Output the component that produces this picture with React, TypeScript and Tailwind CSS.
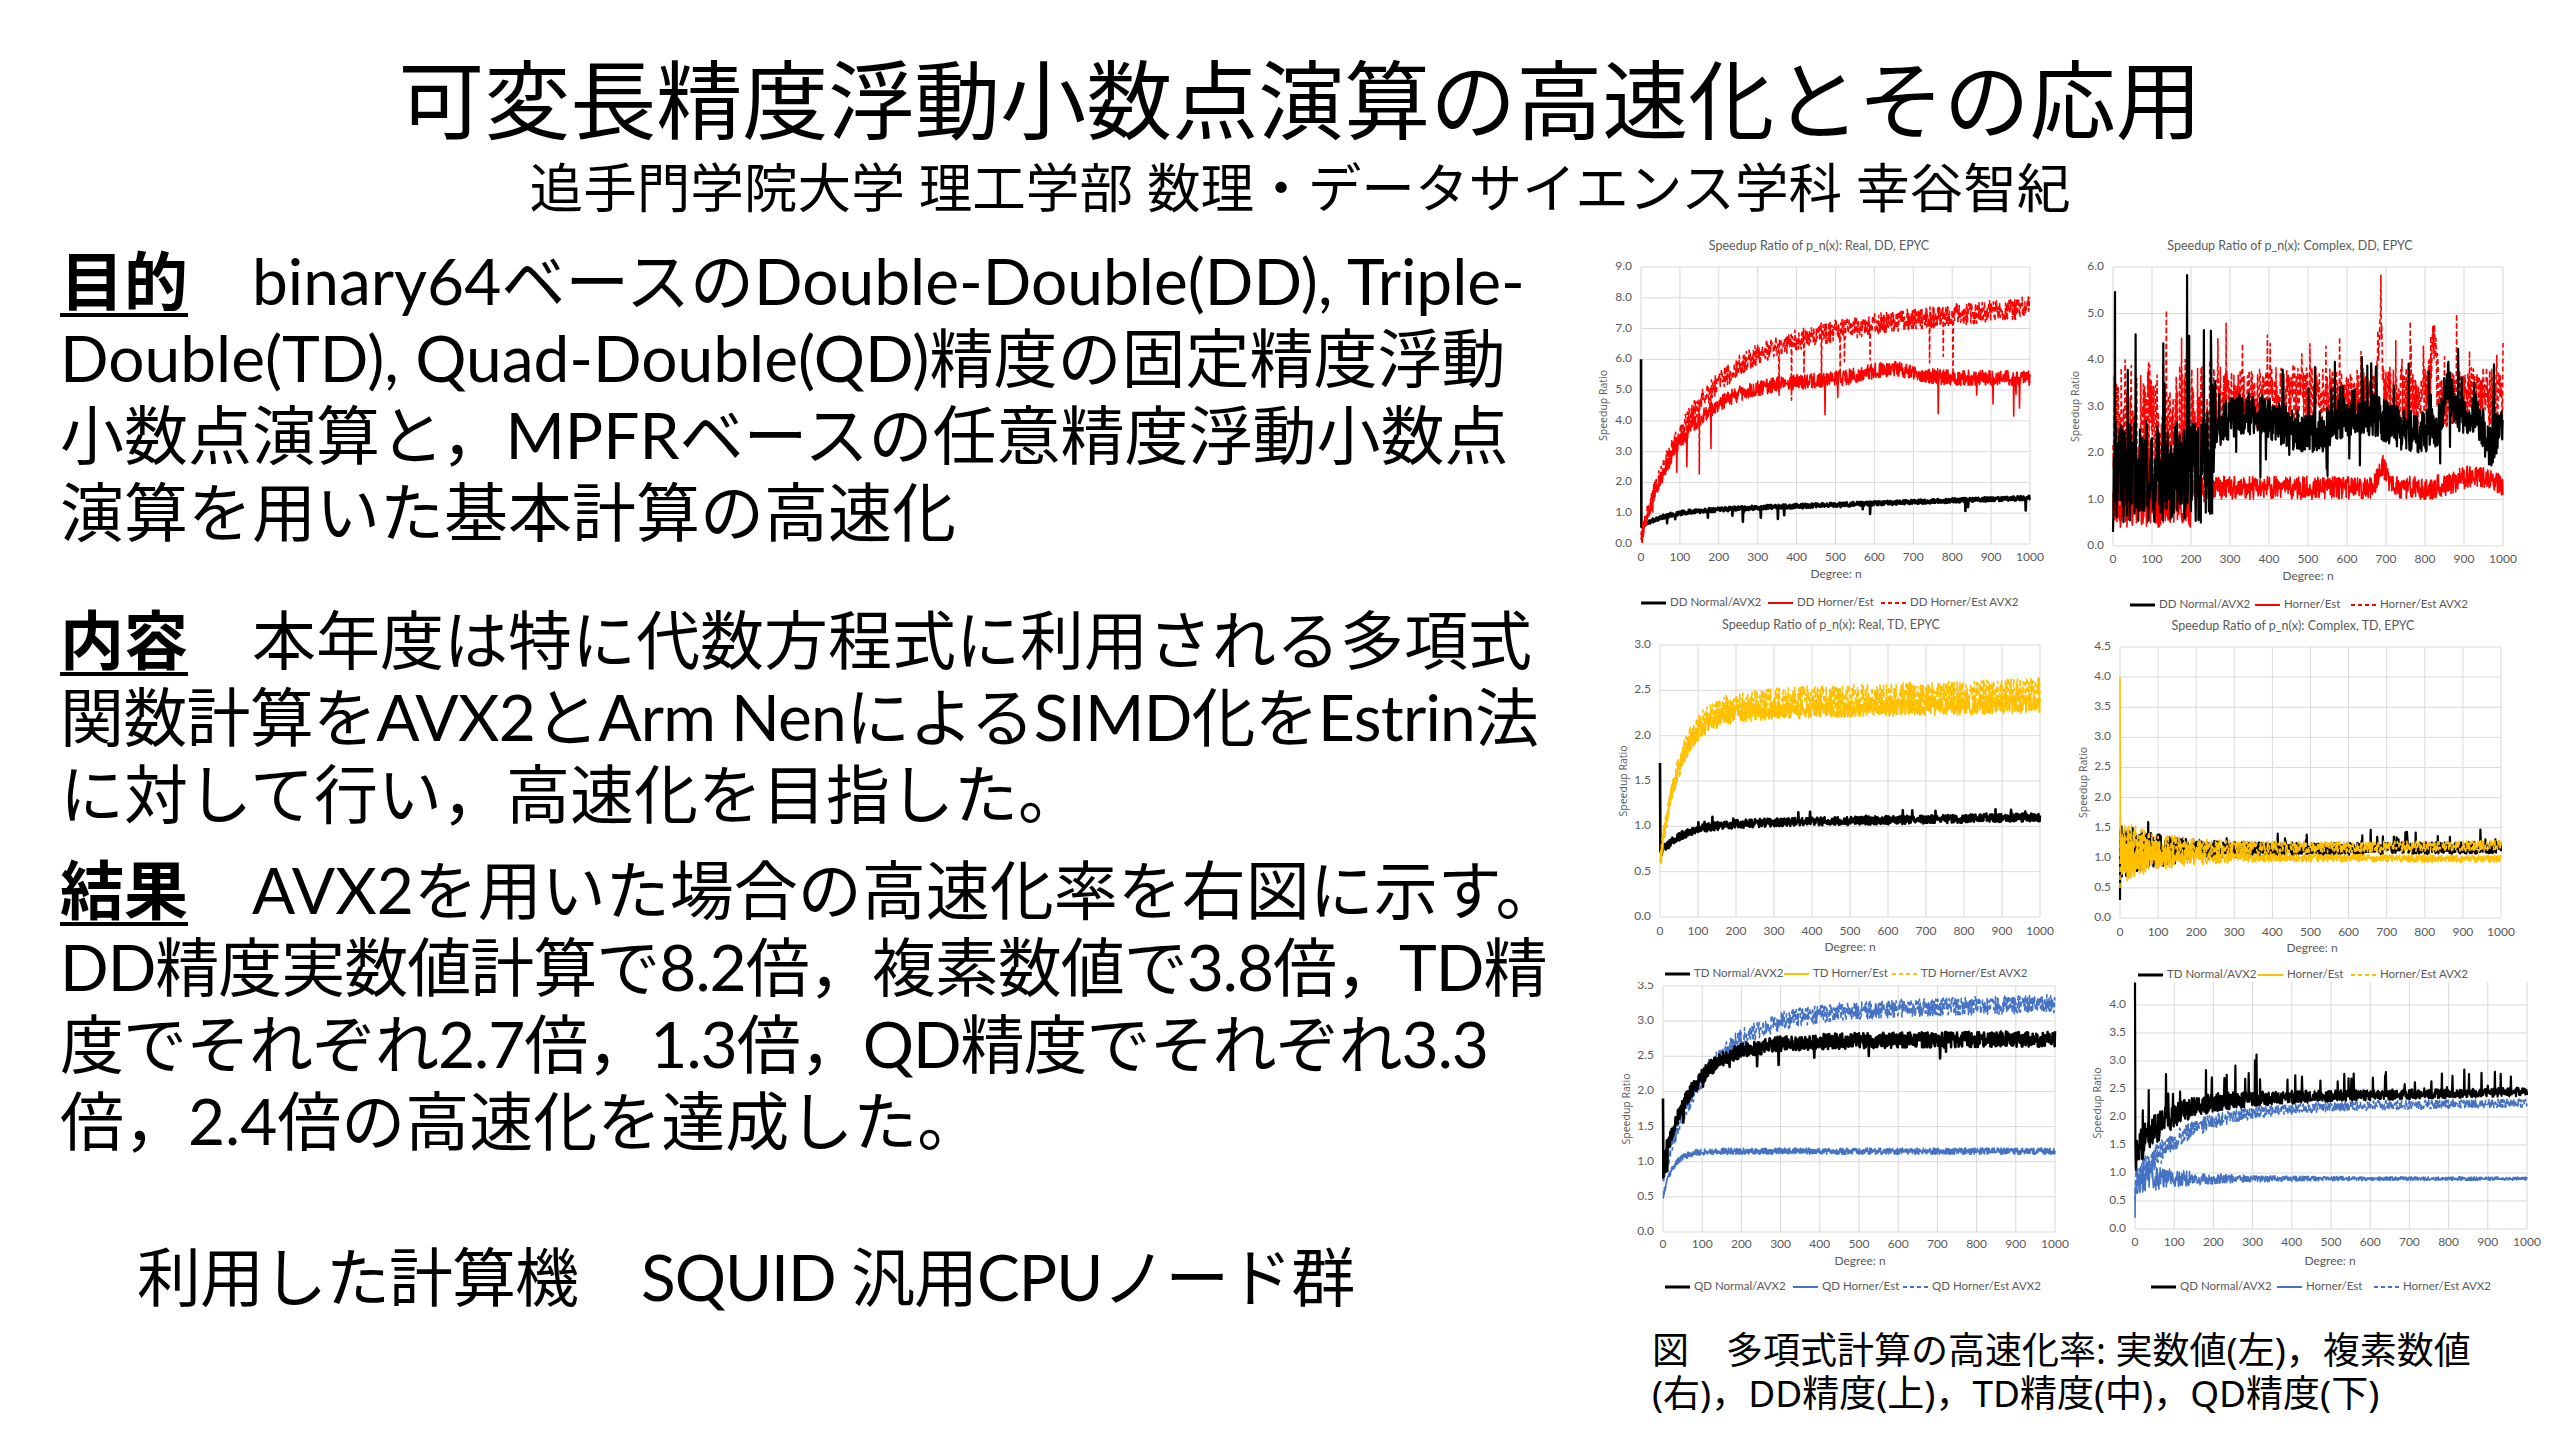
type Series = { color: string; width: number; dash?: string; data: number[] };
type LegendItem = { x: number; label: string; color: string; width: number; dash?: string };
type ChartCfg = {
  title?: string;
  titleX?: number;
  titleY?: number;
  l: number;
  r: number;
  t: number;
  b: number;
  yMax: number;
  yStep: number;
  xLabelY: number;
  degreeX: number;
  degreeY: number;
  speedX: number;
  legendY: number;
  legend: LegendItem[];
  series: Series[];
};

const BLACK = '#000000';
const RED = '#ff0000';
const GOLD = '#ffc000';
const BLUE = '#4472c4';
const TEXT = '#595959';

function mulberry32(a: number) {
  return () => {
    a |= 0;
    a = (a + 0x6d2b79f5) | 0;
    let t = Math.imul(a ^ (a >>> 15), 1 | a);
    t = (t + Math.imul(t ^ (t >>> 7), 61 | t)) ^ t;
    return ((t ^ (t >>> 14)) >>> 0) / 4294967296;
  };
}

// n = 0..1000, r() in [-1, 1], u() in [0, 1)
function gen(seed: number, f: (n: number, r: () => number, u: () => number) => number) {
  const u = mulberry32(seed);
  const r = () => u() * 2 - 1;
  const out: number[] = [];
  for (let n = 0; n <= 1000; n++) out.push(f(n, r, u));
  return out;
}

const sat = (n: number, tau: number) => 1 - Math.exp(-n / tau);
const bump = (n: number, c: number, w: number) => Math.exp(-(((n - c) / w) ** 2));
const spike = (u: () => number, p: number, amp: number) => (u() < p ? amp * (0.5 + u()) : 0);

const legend3 = (xs: number[], labels: string[], color: string): LegendItem[] => [
  { x: xs[0], label: labels[0], color: BLACK, width: 3 },
  { x: xs[1], label: labels[1], color, width: 2 },
  { x: xs[2], label: labels[2], color, width: 2, dash: '4 3' },
];

const BW = 2.6;
const CW = 1.6;

const charts: ChartCfg[] = [
  {
    title: 'Speedup Ratio of p_n(x): Real, DD, EPYC',
    titleX: 1819,
    titleY: 247,
    l: 1641, r: 2030, t: 267, b: 544,
    yMax: 9, yStep: 1,
    xLabelY: 558, degreeX: 1836, degreeY: 575, speedX: 1604, legendY: 603,
    legend: legend3([1641, 1768, 1881], ['DD Normal/AVX2', 'DD Horner/Est', 'DD Horner/Est AVX2'], RED),
    series: [
      { color: BLACK, width: BW, data: gen(11, (n, r, u) => (n === 0 ? 6 : 0.55 + 0.5 * sat(n, 60) + 0.45 * n / 1000 + 0.07 * r() - spike(u, 0.012, 0.3))) },
      { color: RED, width: CW, data: gen(12, (n, r, u) => (n === 0 ? 0.2 : 0.2 + 5.2 * sat(n, 110) + 0.3 * bump(n, 640, 90) + 0.25 * r() - spike(u, 0.01, 1.0))) },
      { color: RED, width: CW, dash: '5 3', data: gen(13, (n, r, u) => (n === 0 ? 0.3 : 0.3 + 6.2 * sat(n, 140) + 1.2 * n / 1000 + 0.35 * r() - spike(u, 0.01, 1.4))) },
    ],
  },
  {
    title: 'Speedup Ratio of p_n(x): Complex, DD, EPYC',
    titleX: 2290,
    titleY: 247,
    l: 2113, r: 2503, t: 267, b: 546,
    yMax: 6, yStep: 1,
    xLabelY: 560, degreeX: 2308, degreeY: 577, speedX: 2076, legendY: 605,
    legend: legend3([2130, 2255, 2351], ['DD Normal/AVX2', 'Horner/Est', 'Horner/Est AVX2'], RED),
    series: [
      { color: RED, width: CW, dash: '5 3', data: gen(21, (n, r, u) => (n < 250 ? 2.4 + 1.7 * r() + spike(u, 0.04, 1.8) : 3.2 + 0.65 * r() + spike(u, 0.05, 0.9) + 1.4 * bump(n, 685, 8) + 1.5 * bump(n, 822, 8))) },
      { color: RED, width: CW, data: gen(22, (n, r, u) => (n < 200 ? 1.0 + 0.6 * r() + spike(u, 0.03, 1.0) : 1.25 + 0.25 * r() + 0.5 * bump(n, 690, 15) + 0.25 * bump(n, 920, 60))) },
      { color: BLACK, width: BW - 0.4, data: gen(23, (n, r, u) => (n === 0 ? 0.3 : n < 260 ? 1.6 + 1.1 * r() + spike(u, 0.05, 2.6) : 2.65 + 0.2 * Math.sin(n / 45) + 0.45 * r() + spike(u, 0.03, 0.9) - spike(u, 0.02, 0.7) + 0.9 * bump(n, 858, 12) - 0.6 * bump(n, 965, 20))) },
    ],
  },
  {
    title: 'Speedup Ratio of p_n(x): Real, TD, EPYC',
    titleX: 1831,
    titleY: 626,
    l: 1660, r: 2040, t: 645, b: 917,
    yMax: 3, yStep: 0.5,
    xLabelY: 932, degreeX: 1850, degreeY: 948, speedX: 1624, legendY: 974,
    legend: legend3([1665, 1784, 1892], ['TD Normal/AVX2', 'TD Horner/Est', 'TD Horner/Est AVX2'], GOLD),
    series: [
      { color: BLACK, width: BW, data: gen(31, (n, r, u) => (n === 0 ? 1.7 : 0.7 + 0.32 * sat(n, 60) + 0.08 * n / 1000 + 0.045 * r() + spike(u, 0.02, 0.06))) },
      { color: GOLD, width: CW, data: gen(32, (n, r) => (n === 0 ? 0.6 : 0.6 + 1.65 * sat(n, 50) + 0.1 * n / 1000 + 0.1 * r())) },
      { color: GOLD, width: CW, dash: '5 3', data: gen(33, (n, r) => (n === 0 ? 0.6 : 0.6 + 1.75 * sat(n, 55) + 0.15 * n / 1000 + 0.14 * r())) },
    ],
  },
  {
    title: 'Speedup Ratio of p_n(x): Complex, TD, EPYC',
    titleX: 2293,
    titleY: 627,
    l: 2120, r: 2501, t: 647, b: 918,
    yMax: 4.5, yStep: 0.5,
    xLabelY: 933, degreeX: 2312, degreeY: 949, speedX: 2084, legendY: 975,
    legend: legend3([2138, 2258, 2351], ['TD Normal/AVX2', 'Horner/Est', 'Horner/Est AVX2'], GOLD),
    series: [
      { color: BLACK, width: BW - 0.4, data: gen(41, (n, r, u) => (n === 0 ? 0.3 : 1.12 + 0.05 * n / 1000 + (0.1 + 0.4 * Math.exp(-n / 120)) * r() + spike(u, 0.02, 0.2))) },
      { color: GOLD, width: CW, data: gen(42, (n, r) => (n === 0 ? 4.0 : 1.02 - 0.04 * n / 1000 + (0.06 + 0.4 * Math.exp(-n / 120)) * r())) },
      { color: GOLD, width: CW, dash: '5 3', data: gen(43, (n, r) => (n === 0 ? 0.5 : 1.15 + 0.05 * n / 1000 + (0.09 + 0.4 * Math.exp(-n / 120)) * r())) },
    ],
  },
  {
    l: 1663, r: 2055, t: 986, b: 1232,
    yMax: 3.5, yStep: 0.5,
    xLabelY: 1245, degreeX: 1860, degreeY: 1262, speedX: 1627, legendY: 1287,
    legend: legend3([1665, 1793, 1903], ['QD Normal/AVX2', 'QD Horner/Est', 'QD Horner/Est AVX2'], BLUE),
    series: [
      { color: BLUE, width: CW, dash: '5 3', data: gen(51, (n, r) => (n === 0 ? 1.0 : 0.8 + 2.3 * sat(n, 110) + 0.15 * n / 1000 + 0.13 * r())) },
      { color: BLACK, width: BW, data: gen(52, (n, r, u) => (n === 0 ? 1.9 : 1.0 + 1.7 * sat(n, 80) + 0.05 * n / 1000 + 0.11 * r() - spike(u, 0.015, 0.2))) },
      { color: BLUE, width: CW, data: gen(53, (n, r) => (n === 0 ? 0.5 : 0.5 + 0.65 * sat(n, 25) + 0.045 * r())) },
    ],
  },
  {
    l: 2135, r: 2527, t: 977, b: 1229,
    yMax: 4.5, yStep: 0.5,
    xLabelY: 1243, degreeX: 2330, degreeY: 1262, speedX: 2098, legendY: 1287,
    legend: legend3([2151, 2277, 2374], ['QD Normal/AVX2', 'Horner/Est', 'Horner/Est AVX2'], BLUE),
    series: [
      { color: BLUE, width: CW, dash: '5 3', data: gen(61, (n, r) => (n === 0 ? 0.5 : 0.8 + 1.35 * sat(n, 120) + 0.1 * n / 1000 + (0.08 + 0.2 * Math.exp(-n / 150)) * r())) },
      { color: BLACK, width: BW - 0.4, data: gen(62, (n, r, u) => (n === 0 ? 4.4 : 1.3 + 1.0 * sat(n, 80) + 0.15 * n / 1000 + (0.08 + 0.25 * Math.exp(-n / 200)) * r() + spike(u, 0.04, n < 400 ? 0.6 : 0.3))) },
      { color: BLUE, width: CW, data: gen(63, (n, r) => (n === 0 ? 0.2 : 0.9 + (0.03 + 0.25 * Math.exp(-n / 150)) * r())) },
    ],
  },
];

const origins = [
  [1590, 232, 470, 383],
  [2060, 232, 485, 383],
  [1590, 615, 470, 367],
  [2060, 615, 485, 367],
  [1590, 982, 470, 318],
  [2060, 982, 485, 318],
];

function Chart({ cfg, ox, oy, w, h, id }: { cfg: ChartCfg; ox: number; oy: number; w: number; h: number; id: string }) {
  const L = cfg.l - ox;
  const R = cfg.r - ox;
  const T = cfg.t - oy;
  const B = cfg.b - oy;
  const sx = (n: number) => L + (n / 1000) * (R - L);
  const sy = (v: number) => B - (Math.max(0, Math.min(cfg.yMax, v)) / cfg.yMax) * (B - T);
  const yTicks: number[] = [];
  for (let i = 0; i <= Math.round(cfg.yMax / cfg.yStep); i++) yTicks.push(i * cfg.yStep);
  const xTicks = Array.from({ length: 11 }, (_, i) => i * 100);

  return (
    <svg
      width={w}
      height={h}
      viewBox={`0 0 ${w} ${h}`}
      overflow="visible"
      className="block"
      fontFamily="Lato, 'Liberation Sans', sans-serif"
    >
      <defs>
        <clipPath id={id}>
          <rect x={-60} y={0} width={w + 120} height={h + 40} />
        </clipPath>
      </defs>
      <g clipPath={`url(#${id})`}>
        {cfg.title && (
          <text x={cfg.titleX! - ox} y={cfg.titleY! - oy} textAnchor="middle" dominantBaseline="middle" fontSize={12.5} fill={TEXT}>
            {cfg.title}
          </text>
        )}
        {yTicks.map((v) => (
          <line key={`h${v}`} x1={L} x2={R} y1={sy(v)} y2={sy(v)} stroke="#d9d9d9" strokeWidth={1} />
        ))}
        {xTicks.map((n) => (
          <line key={`v${n}`} x1={sx(n)} x2={sx(n)} y1={T} y2={B} stroke="#d9d9d9" strokeWidth={1} />
        ))}
        {yTicks.map((v) => (
          <text key={`yl${v}`} x={L - 9} y={sy(v)} textAnchor="end" dominantBaseline="middle" fontSize={12} fill={TEXT}>
            {v.toFixed(1)}
          </text>
        ))}
        {xTicks.map((n) => (
          <text key={`xl${n}`} x={sx(n)} y={cfg.xLabelY - oy} textAnchor="middle" dominantBaseline="middle" fontSize={12} fill={TEXT}>
            {n}
          </text>
        ))}
        <text
          transform={`translate(${cfg.speedX - ox} ${(T + B) / 2}) rotate(-90)`}
          textAnchor="middle"
          dominantBaseline="middle"
          fontSize={10.5}
          fill={TEXT}
          fontFamily="'Open Sans', sans-serif"
        >
          Speedup Ratio
        </text>
        {cfg.series.map((s, i) => (
          <polyline
            key={i}
            fill="none"
            stroke={s.color}
            strokeWidth={s.width}
            strokeDasharray={s.dash}
            strokeLinejoin="round"
            points={s.data.map((v, n) => `${sx(n).toFixed(1)},${sy(v).toFixed(1)}`).join(' ')}
          />
        ))}
        <text x={cfg.degreeX - ox} y={cfg.degreeY - oy} textAnchor="middle" dominantBaseline="middle" fontSize={12} fill={TEXT}>
          Degree: n
        </text>
        {cfg.legend.map((it) => (
          <g key={it.label}>
            <line
              x1={it.x - ox}
              x2={it.x - ox + 25}
              y1={cfg.legendY - oy}
              y2={cfg.legendY - oy}
              stroke={it.color}
              strokeWidth={it.width}
              strokeDasharray={it.dash}
            />
            <text x={it.x - ox + 29} y={cfg.legendY - oy} dominantBaseline="middle" fontSize={11.5} fill={TEXT}>
              {it.label}
            </text>
          </g>
        ))}
      </g>
    </svg>
  );
}

function Heading({ children }: { children: string }) {
  return <span className="font-bold underline decoration-[4px] underline-offset-[8px]">{children}</span>;
}

export default function App() {
  return (
    <div className="w-[2560px] h-[1440px] overflow-hidden bg-white text-black font-['Noto_Sans','Noto_Sans_CJK_JP',sans-serif]">
      {/* Title */}
      <div className="flex flex-col items-center pt-[50px] pl-[40px]">
        <h1 className="text-[86px] leading-[100px] font-normal whitespace-nowrap">可変長精度浮動小数点演算の高速化とその応用</h1>
        <div className="mt-[6px] text-[53.6px] leading-[64px] whitespace-nowrap">
          追手門学院大学 理工学部 数理・データサイエンス学科 幸谷智紀
        </div>
      </div>

      <div className="mt-[12px] flex">
        {/* Body text */}
        <div className="w-[1590px] pl-[60px] pt-[10px] text-[64px] leading-[77px] whitespace-nowrap font-['Lato','Noto_Sans_CJK_JP',sans-serif]">
          <div>
            <div>
              <Heading>目的</Heading>　binary64ベースのDouble-Double(DD), Triple-
            </div>
            <div>Double(TD), Quad-Double(QD)精度の固定精度浮動</div>
            <div>小数点演算と，MPFRベースの任意精度浮動小数点</div>
            <div>演算を用いた基本計算の高速化</div>
          </div>
          <div className="mt-[51px]">
            <div>
              <Heading>内容</Heading>　本年度は特に代数方程式に利用される多項式
            </div>
            <div className="tracking-[-0.75px]">関数計算をAVX2とArm NenによるSIMD化をEstrin法</div>
            <div>に対して行い，高速化を目指した。</div>
          </div>
          <div className="mt-[19px]">
            <div>
              <Heading>結果</Heading>　AVX2を用いた場合の高速化率を右図に示す。
            </div>
            <div className="tracking-[-1px]">DD精度実数値計算で8.2倍，複素数値で3.8倍，TD精</div>
            <div className="tracking-[-1px]">度でそれぞれ2.7倍，1.3倍，QD精度でそれぞれ3.3</div>
            <div>倍，2.4倍の高速化を達成した。</div>
          </div>
          <div className="mt-[79px] pl-[77px] tracking-[-1px]">利用した計算機　SQUID 汎用CPUノード群</div>
        </div>

        {/* Charts */}
        <div className="flex flex-col">
          <div className="grid grid-cols-[470px_485px] grid-rows-[383px_367px_318px]">
            {charts.map((c, i) => {
              const [ox, oy, w, h] = origins[i];
              return <Chart key={i} id={`clip${i}`} cfg={c} ox={ox} oy={oy} w={w} h={h} />;
            })}
          </div>
          <div className="mt-[28px] pl-[62px] text-[37px] leading-[43px] whitespace-nowrap">
            <div>図　多項式計算の高速化率: 実数値(左)，複素数値</div>
            <div>(右)，DD精度(上)，TD精度(中)，QD精度(下)</div>
          </div>
        </div>
      </div>
    </div>
  );
}
